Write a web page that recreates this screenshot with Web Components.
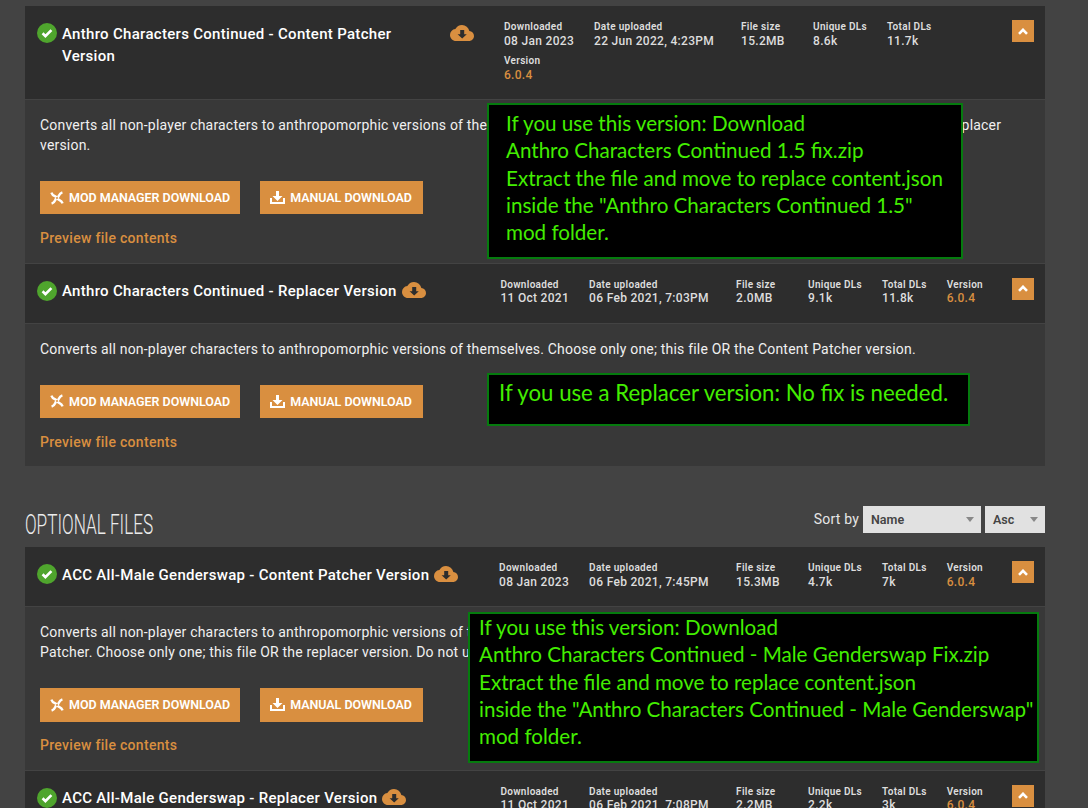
<!DOCTYPE html>
<html lang="en">
<head>
<meta charset="utf-8">
<title>Files</title>
<style>
body {
  margin: 0;
  height: 808px;
  overflow: hidden;
  background: #434343;
  font-family: Roboto, "Liberation Sans", sans-serif;
}
.tight {
  letter-spacing: -0.1px;
}
</style>
</head>
<body>
<files-page>
  <file-list>
    <file-entry name="Anthro Characters Continued - Content Patcher Version" downloaded="08 Jan 2023" uploaded="22 Jun 2022, 4:23PM" size="15.2MB" unique="8.6k" total="11.7k" version="6.0.4" wrap>
      Converts all non-player characters to anthropomorphic versions of themselves. <span class="tight">Requires Content Patcher mod. Choose only</span> one; this file OR the replacer<br>version.
      <pinned-note slot="note" style="left: 462px; top: 3px; width: 476px; height: 156px; padding: 5px 0 0 17px">
        <note-line>If you use this version: Download</note-line>
        <note-line>Anthro Characters Continued 1.5 fix.zip</note-line>
        <note-line>Extract the file and move to replace content.json</note-line>
        <note-line>inside the "Anthro Characters Continued 1.5"</note-line>
        <note-line>mod folder.</note-line>
      </pinned-note>
    </file-entry>
    <file-entry name="Anthro Characters Continued - Replacer Version" downloaded="11 Oct 2021" uploaded="06 Feb 2021, 7:03PM" size="2.0MB" unique="9.1k" total="11.8k" version="6.0.4">
      Converts all non-player characters to anthropomorphic versions of themselves. Choose only one; this file OR the Content Patcher version.
      <pinned-note slot="note" style="left: 462px; top: 49px; width: 483px; height: 53.5px; padding: 4px 0 0 10px; --note-size: 22.2px">
        <note-line>If you use a Replacer version: No fix is needed.</note-line>
      </pinned-note>
    </file-entry>
  </file-list>
  <section-bar heading="Optional files"></section-bar>
  <file-list>
    <file-entry name="ACC All-Male Genderswap - Content Patcher Version" downloaded="08 Jan 2023" uploaded="06 Feb 2021, 7:45PM" size="15.3MB" unique="4.7k" total="7k" version="6.0.4">
      Converts all non-player characters to anthropomorphic versions of themselves, with all characters male. Requires Content<br>Patcher. Choose only one; this file OR the replacer version. Do not use both.
      <pinned-note slot="note" style="left: 443px; top: 5px; width: 571px; height: 151px; padding: 0 0 0 9px">
        <note-line>If you use this version: Download</note-line>
        <note-line>Anthro Characters Continued - Male Genderswap Fix.zip</note-line>
        <note-line>Extract the file and move to replace content.json</note-line>
        <note-line>inside the "Anthro Characters Continued - Male Genderswap"</note-line>
        <note-line>mod folder.</note-line>
      </pinned-note>
    </file-entry>
    <file-entry name="ACC All-Male Genderswap - Replacer Version" downloaded="11 Oct 2021" uploaded="06 Feb 2021, 7:08PM" size="2.2MB" unique="2.2k" total="3k" version="6.0.4"></file-entry>
  </file-list>
</files-page>

<script>
'use strict';

(function() {

const ICONS = {
  check: `<svg width="20" height="20" viewBox="0 0 20 20"><circle cx="10" cy="10" r="10" fill="#4fa52d"/><path d="M5.6 10.3l2.8 2.8 6-6" fill="none" stroke="#fff" stroke-width="2.7"/></svg>`,
  cloud: `<svg width="24" height="16" viewBox="0 0 24 16"><path fill="#d98f40" d="M19.35 6.04A7.49 7.49 0 0 0 12 0C9.11 0 6.6 1.64 5.35 4.04A5.994 5.994 0 0 0 0 10c0 3.31 2.69 6 6 6h13c2.76 0 5-2.24 5-5 0-2.64-2.05-4.78-4.65-4.96z"/><path fill="#2d2d2d" d="M10.2 5h4v4.2h2.600L12.200 13.500 7.600 9.200h2.600z"/></svg>`,
  vortex: `<svg width="14" height="14" viewBox="0 0 14 14" fill="none" stroke="#fff" stroke-width="2.4"><g id="b"><path d="M7.800 6.500C9.200 5.300 8.700 2.600 12.400 1.400"/></g><use href="#b" transform="rotate(90 7 7)"/><use href="#b" transform="rotate(180 7 7)"/><use href="#b" transform="rotate(270 7 7)"/></svg>`,
  tray: `<svg width="15" height="13" viewBox="0 0 15 13" fill="#fff"><path d="M6 0h3v5h3.500l-5 5-5-5H6z"/><path d="M0 7h2v4h11V7h2v6H0z"/></svg>`,
  up: `<svg width="10" height="7" viewBox="0 0 10 7"><path d="M1 5.800l4-4 4 4" fill="none" stroke="#fff" stroke-width="2.600"/></svg>`,
};

class FilesPage extends HTMLElement {
  constructor() {
    super();
    this.attachShadow({mode: 'open'}).innerHTML = `
<style>
:host {
  display: block;
  box-sizing: border-box;
  width: 1045px;
  height: 808px;
  padding: 6px 0 0 25px;
  overflow: hidden;
}
</style>
<slot></slot>
    `;
  }
}

class FileList extends HTMLElement {
  constructor() {
    super();
    this.attachShadow({mode: 'open'}).innerHTML = `
<style>
:host {
  display: flex;
  flex-direction: column;
  gap: 1px;
}
</style>
<slot></slot>
    `;
  }
}

class FileStat extends HTMLElement {
  constructor() {
    super();
    this.attachShadow({mode: 'open'}).innerHTML = `
<style>
:host {
  display: block;
  color: #ddd;
  font-weight: 500;
  white-space: nowrap;
}
.label {
  font-size: 10px;
  line-height: 14px;
  font-weight: 600;
  letter-spacing: 0.3px;
}
.value {
  margin: -0.35px 0 0.35px;
  font-size: 12px;
  line-height: 14px;
  letter-spacing: 0.3px;
}
:host([accent]) .value {
  color: #d98f40;
}
</style>
<div class="label">${this.getAttribute('label')}</div>
<div class="value"><slot></slot></div>
    `;
  }
}

class DownloadButton extends HTMLElement {
  constructor() {
    super();
    this.attachShadow({mode: 'open'}).innerHTML = `
<style>
:host {
  display: flex;
  align-items: center;
  box-sizing: border-box;
  height: 33.4px;
  min-width: 163px;
  padding: 0 10px;
  gap: 5px;
  background: #d98f40;
  color: #fff;
  font-size: 12.5px;
  font-weight: 600;
  letter-spacing: -0.04px;
  white-space: nowrap;
  cursor: pointer;
}
svg {
  flex: none;
}
</style>
${ICONS[this.getAttribute('icon')]}
<span><slot></slot></span>
    `;
  }
}

class FileEntry extends HTMLElement {
  constructor() {
    super();
    const attr = name => this.getAttribute(name);
    this.attachShadow({mode: 'open'}).innerHTML = `
<style>
:host {
  display: flex;
  flex-direction: column;
  gap: 1px;
}
header {
  display: flex;
  align-items: flex-start;
  box-sizing: border-box;
  height: 59px;
  padding: 14px 11px 0 12px;
  background: #2d2d2d;
}
:host([wrap]) header {
  height: 93px;
}
.check {
  height: 20px;
  margin: 3px 5px 0 0;
}
.title {
  flex: 1;
  display: flex;
  align-items: flex-start;
  gap: 5px;
  margin-top: 2.65px;
  color: #fff;
  font-size: 15px;
  line-height: 22px;
  font-weight: 500;
  letter-spacing: 0.3px;
  white-space: nowrap;
}
:host([wrap]) .title {
  flex: 0 0 412px;
  justify-content: space-between;
  white-space: normal;
}
:host([wrap]) .name {
  width: 350px;
}
.cloud {
  margin-top: 2px;
  line-height: 0;
}
.stats {
  display: flex;
  gap: 6px 20px;
  flex: none;
  margin: 0 29px 0 0;
}
:host([wrap]) .stats {
  flex: 1;
  flex-wrap: wrap;
  margin-left: 30px;
}
.date {
  min-width: 127px;
}
.size {
  min-width: 52px;
}
.toggle {
  display: flex;
  align-items: center;
  justify-content: center;
  width: 22px;
  height: 22px;
  background: #d98f40;
}
.body {
  position: relative;
  padding: 15px 15px 14.5px;
  background: #383838;
}
.desc {
  color: #f0f0f0;
  font-size: 14px;
  line-height: 20px;
  letter-spacing: 0.195px;
  white-space: nowrap;
}
.buttons {
  display: flex;
  gap: 20px;
  margin: 26px 0 13.7px;
}
.preview {
  color: #d98f40;
  font-size: 14px;
  line-height: 20px;
  font-weight: 500;
  letter-spacing: 0.3px;
}
</style>
<header>
  <div class="check">${ICONS.check}</div>
  <div class="title"><span class="name">${attr('name')}</span><span class="cloud">${ICONS.cloud}</span></div>
  <div class="stats">
    <file-stat label="Downloaded">${attr('downloaded')}</file-stat>
    <file-stat class="date" label="Date uploaded">${attr('uploaded')}</file-stat>
    <file-stat class="size" label="File size">${attr('size')}</file-stat>
    <file-stat label="Unique DLs">${attr('unique')}</file-stat>
    <file-stat label="Total DLs">${attr('total')}</file-stat>
    <file-stat label="Version" accent>${attr('version')}</file-stat>
  </div>
  <div class="toggle">${ICONS.up}</div>
</header>
<div class="body">
  <div class="desc"><slot></slot></div>
  <div class="buttons">
    <download-button icon="vortex">MOD MANAGER DOWNLOAD</download-button>
    <download-button icon="tray">MANUAL DOWNLOAD</download-button>
  </div>
  <div class="preview">Preview file contents</div>
  <slot name="note"></slot>
</div>
    `;
  }
}

class PinnedNote extends HTMLElement {
  constructor() {
    super();
    this.attachShadow({mode: 'open'}).innerHTML = `
<style>
:host {
  position: absolute;
  box-sizing: border-box;
  border: 2px solid #057b0e;
  background: #000;
  color: #43ee00;
  font-family: Lato, "Open Sans", sans-serif;
  font-size: var(--note-size, 20.6px);
}
</style>
<slot></slot>
    `;
  }
}

class NoteLine extends HTMLElement {
  constructor() {
    super();
    this.attachShadow({mode: 'open'}).innerHTML = `
<style>
:host {
  display: block;
  line-height: 27.25px;
  white-space: nowrap;
}
</style>
<slot></slot>
    `;
  }
}

class SectionBar extends HTMLElement {
  constructor() {
    super();
    this.attachShadow({mode: 'open'}).innerHTML = `
<style>
:host {
  display: flex;
  align-items: center;
  height: 27px;
  padding: 40px 0 14px;
}
h2 {
  flex: 1;
  margin: 11px 0 0;
  color: #ececec;
  font-size: 28px;
  line-height: 28px;
  font-weight: 300;
  text-transform: uppercase;
  white-space: nowrap;
  transform: scaleX(0.613);
  transform-origin: 0 0;
}
label {
  margin: -2px 4px 0 0;
  color: #e6e6e6;
  font-size: 14px;
  letter-spacing: 0.2px;
}
.select {
  display: flex;
  align-items: center;
  justify-content: space-between;
  box-sizing: border-box;
  width: 118px;
  height: 27px;
  padding: 0 7px 0 8px;
  background: #e1e1e1;
  color: #444;
  font-size: 12.5px;
  font-weight: 600;
}
.order {
  width: 60px;
  margin-left: 4px;
}
.select::after {
  content: '';
  border: 4px solid transparent;
  border-top: 5px solid #888;
  border-bottom: 0;
}
</style>
<h2>${this.getAttribute('heading')}</h2>
<label>Sort by</label>
<div class="select">Name</div>
<div class="select order">Asc</div>
    `;
  }
}

customElements.define('files-page', FilesPage);
customElements.define('file-list', FileList);
customElements.define('file-stat', FileStat);
customElements.define('download-button', DownloadButton);
customElements.define('file-entry', FileEntry);
customElements.define('pinned-note', PinnedNote);
customElements.define('note-line', NoteLine);
customElements.define('section-bar', SectionBar);

}());
</script>
</body>
</html>
